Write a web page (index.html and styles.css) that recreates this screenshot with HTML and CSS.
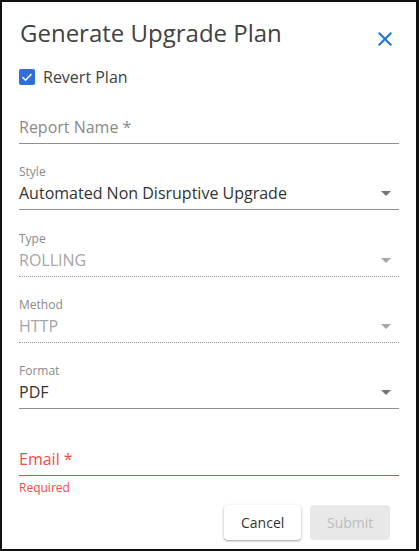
FILE: index.html
```html
<!DOCTYPE html>
<html>
<head>
<meta charset="utf-8">
<link rel="stylesheet" href="styles.css">
</head>
<body>
<div class="dialog">
  <div class="header">
    <h1 class="title">Generate Upgrade Plan</h1>
    <svg class="close" width="24" height="24" viewBox="0 0 24 24"><path d="M19 6.41L17.59 5 12 10.59 6.41 5 5 6.41 10.59 12 5 17.59 6.41 19 12 13.41 17.59 19 19 17.59 13.41 12z" fill="#1976d2"/></svg>
  </div>
  <label class="check-row">
    <span class="checkbox"><svg width="16" height="16" viewBox="0 0 16 16"><path d="M3.5 8.2l3 3 6-6.2" fill="none" stroke="#fff" stroke-width="1.6"/></svg></span>
    <span class="check-label">Revert Plan</span>
  </label>
  <div class="field first">
    <div class="label"></div>
    <div class="value placeholder">Report Name *</div>
  </div>
  <div class="field">
    <div class="label">Style</div>
    <div class="value">Automated Non Disruptive Upgrade<span class="arrow"></span></div>
  </div>
  <div class="field disabled wide">
    <div class="label">Type</div>
    <div class="value">ROLLING<span class="arrow"></span></div>
  </div>
  <div class="field disabled">
    <div class="label">Method</div>
    <div class="value">HTTP<span class="arrow"></span></div>
  </div>
  <div class="field">
    <div class="label">Format</div>
    <div class="value">PDF<span class="arrow"></span></div>
  </div>
  <div class="field error wide">
    <div class="label"></div>
    <div class="value">Email *</div>
    <div class="helper">Required</div>
  </div>
  <div class="actions">
    <button class="btn cancel">Cancel</button>
    <button class="btn submit" disabled>Submit</button>
  </div>
</div>
</body>
</html>
```

FILE: styles.css
```css
html, body {
  margin: 0;
  padding: 0;
  background: #fff;
}
.dialog {
  box-sizing: border-box;
  width: 419px;
  height: 551px;
  border: 2px solid #111;
  border-right-width: 3px;
  padding: 15px 17px 0 17px;
  font-family: "Open Sans", "Liberation Sans", sans-serif;
  color: #424242;
  display: flex;
  flex-direction: column;
}
.header {
  display: flex;
  justify-content: space-between;
  align-items: flex-start;
  height: 32px;
}
.title {
  margin: 0;
  font-size: 24px;
  line-height: 32px;
  font-weight: 400;
  color: #424242;
  padding-left: 1px;
}
.close {
  margin-top: 10px;
  margin-right: 2px;
}
.check-row {
  display: flex;
  align-items: center;
  height: 24px;
  margin-top: 16px;
}
.checkbox {
  width: 16px;
  height: 16px;
  border-radius: 2px;
  background: #2f6fd9;
  display: flex;
}
.check-label {
  margin-left: 8px;
  font-size: 16px;
  color: #424242;
}
.field {
  margin-top: 19px;
  display: flex;
  flex-direction: column;
}
.field.first {
  margin-top: 8px;
}
.field.wide {
  margin-top: 20px;
}
.label {
  height: 18px;
  font-size: 12px;
  line-height: 18px;
  color: #8a8a8a;
}
.value {
  position: relative;
  font-size: 16px;
  line-height: 24px;
  padding: 0 0 4px 0;
  color: #333;
  border-bottom: 1px solid #8f8f8f;
}
.value.placeholder {
  color: #8a8a8a;
}
.arrow {
  position: absolute;
  right: 8px;
  top: 10px;
  width: 0;
  height: 0;
  border-left: 5px solid transparent;
  border-right: 5px solid transparent;
  border-top: 5px solid #757575;
}
.disabled .value {
  color: #a6a6a6;
  border-bottom: 1px dotted #9a9a9a;
}
.disabled .arrow {
  border-top-color: #a6a6a6;
}
.error .value {
  color: #f5474a;
  border-bottom-color: #f5474a;
}
.helper {
  margin-top: 4px;
  font-size: 12px;
  line-height: 16px;
  color: #f5474a;
}
.actions {
  display: flex;
  justify-content: flex-end;
  gap: 9px;
  margin-top: 9px;
  padding-right: 9px;
}
.btn {
  font-family: "Open Sans", "Liberation Sans", sans-serif;
  font-size: 14px;
  height: 35px;
  border: none;
  border-radius: 4px;
  padding: 0 17px;
}
.cancel {
  background: #fff;
  color: #333;
  box-shadow: 0 1px 3px rgba(0,0,0,0.3), 0 1px 1px rgba(0,0,0,0.12);
  width: 77px;
}
.submit {
  background: #e8e8e8;
  color: #bdbdbd;
  width: 80px;
}
```
